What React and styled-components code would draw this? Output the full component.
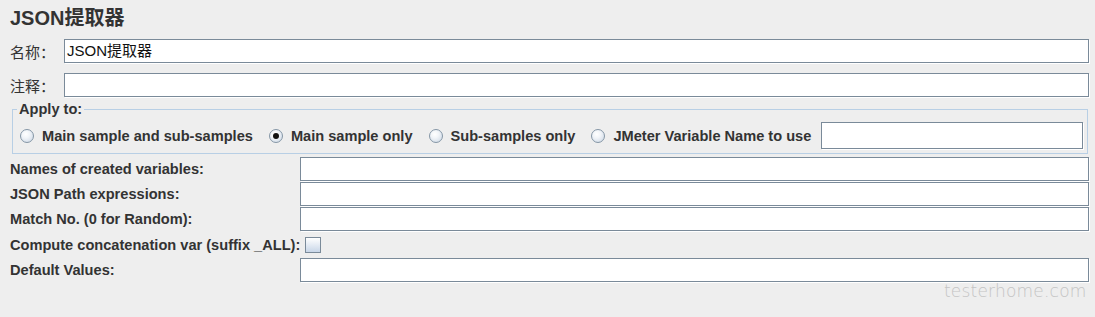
import React from "react";
import styled, { createGlobalStyle } from "styled-components";

const Global = createGlobalStyle`
  html, body { margin: 0; padding: 0; background: #eeeeee; }
  body { font-family: "Liberation Sans", "Noto Sans CJK SC", sans-serif; color: #333333; }
  * { box-sizing: border-box; }
`;

const Page = styled.div`
  position: relative;
  width: 1095px;
  height: 317px;
  padding: 6px 6px 0 10px;
  background: #eeeeee;
  overflow: hidden;
`;

const Title = styled.h1`
  margin: 0;
  font-size: 20px;
  line-height: 24px;
  font-weight: bold;
  color: #333333;
`;

const NameRow = styled.div`
  display: flex;
  align-items: center;
  height: 24px;
  margin-top: ${(p) => p.$mt}px;
`;

const CnLabel = styled.span`
  width: 54px;
  font-size: 15px;
  color: #333333;
`;

const TextField = styled.div`
  flex: 1;
  height: 100%;
  background: #ffffff;
  border: 1px solid #7a8a99;
  box-shadow: 1px 1px 0 #ffffff;
  padding-left: 2px;
  font-size: 15px;
  line-height: 22px;
  color: #111111;
  white-space: nowrap;
`;

const Group = styled.fieldset`
  margin: 4px 1px 0 2px;
  padding: 5px 4px 4px 7px;
  border: 1px solid #b8cfe5;
  min-width: 0;
`;

const Legend = styled.legend`
  margin-left: -3px;
  padding: 0 2px;
  font-size: 14.6px;
  line-height: 16px;
  font-weight: bold;
  color: #333333;
`;

const RadioRow = styled.div`
  display: flex;
  align-items: center;
  height: 27px;
  gap: 16px;
`;

const RadioItem = styled.label`
  display: flex;
  align-items: center;
  gap: 8px;
  font-size: 14.6px;
  font-weight: bold;
  white-space: nowrap;
`;

const RadioDot = styled.span`
  position: relative;
  width: 14px;
  height: 14px;
  border-radius: 50%;
  border: 1px solid #8596a6;
  background: radial-gradient(circle at 40% 35%, #ffffff 0%, #f2f5f9 35%, #c9d5e3 100%);
  flex: none;
  &::after {
    content: "";
    display: ${(p) => (p.$on ? "block" : "none")};
    position: absolute;
    left: 3px;
    top: 3px;
    width: 6px;
    height: 6px;
    border-radius: 50%;
    background: #111111;
  }
`;

const VarField = styled.div`
  flex: 1;
  height: 27px;
  margin-left: -6px;
  background: #ffffff;
  border: 1px solid #7a8a99;
  box-shadow: 1px 1px 0 #ffffff;
`;

const Form = styled.div`
  display: flex;
  flex-direction: column;
  gap: 1px;
  margin-top: 3px;
`;

const Row = styled.div`
  display: flex;
  align-items: center;
  height: ${(p) => p.$h || 24}px;
`;

const Label = styled.span`
  width: 290px;
  flex: none;
  font-size: 14.6px;
  font-weight: bold;
  white-space: nowrap;
  color: #333333;
`;

const Check = styled.span`
  width: 16px;
  height: 16px;
  margin-left: 5px;
  border: 1px solid #7a8a99;
  background: linear-gradient(#ffffff, #c8d6e8);
`;

const Watermark = styled.div`
  position: absolute;
  left: 944px;
  top: 281px;
  font-family: "DejaVu Sans", sans-serif;
  font-weight: 200;
  font-size: 17px;
  letter-spacing: 0.2px;
  color: #c4c4c4;
`;

export default function App() {
  return (
    <>
      <Global />
      <Page>
        <Title>JSON提取器</Title>
        <NameRow $mt={9}>
          <CnLabel>名称：</CnLabel>
          <TextField>JSON提取器</TextField>
        </NameRow>
        <NameRow $mt={10}>
          <CnLabel>注释：</CnLabel>
          <TextField />
        </NameRow>
        <Group>
          <Legend>Apply to:</Legend>
          <RadioRow>
            <RadioItem><RadioDot />Main sample and sub-samples</RadioItem>
            <RadioItem><RadioDot $on />Main sample only</RadioItem>
            <RadioItem><RadioDot />Sub-samples only</RadioItem>
            <RadioItem><RadioDot />JMeter Variable Name to use</RadioItem>
            <VarField />
          </RadioRow>
        </Group>
        <Form>
          <Row><Label>Names of created variables:</Label><TextField /></Row>
          <Row><Label>JSON Path expressions:</Label><TextField /></Row>
          <Row><Label>Match No. (0 for Random):</Label><TextField /></Row>
          <Row $h={25}><Label>Compute concatenation var (suffix _ALL):</Label><Check /></Row>
          <Row><Label>Default Values:</Label><TextField /></Row>
        </Form>
        <Watermark>testerhome.com</Watermark>
      </Page>
    </>
  );
}
